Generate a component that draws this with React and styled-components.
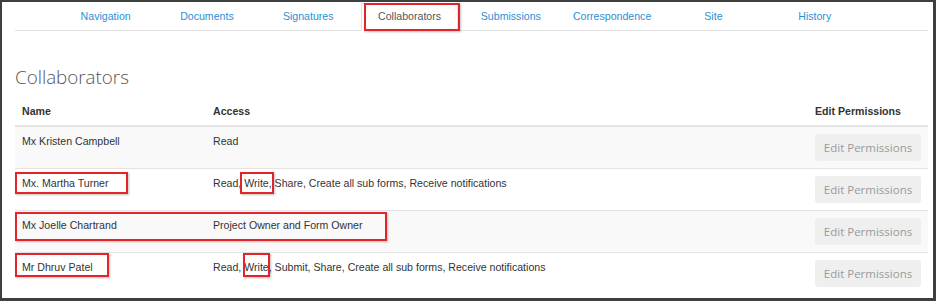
import React from 'react';
import { createGlobalStyle, styled, css } from 'styled-components';

const tabs = [
  'Navigation',
  'Documents',
  'Signatures',
  'Collaborators',
  'Submissions',
  'Correspondence',
  'Site',
  'History',
];

const collaborators = [
  { name: 'Mx Kristen Campbell', access: 'Read' },
  { name: 'Mx. Martha Turner', access: 'Read, Write, Share, Create all sub forms, Receive notifications' },
  { name: 'Mx Joelle Chartrand', access: 'Project Owner and Form Owner' },
  { name: 'Mr Dhruv Patel', access: 'Read, Write, Submit, Share, Create all sub forms, Receive notifications' },
];

// red call-outs drawn over the screenshot, page coordinates
const marks = [
  { x: 364, y: 3, w: 96, h: 28 },
  { x: 15, y: 172, w: 113, h: 22 },
  { x: 240, y: 172, w: 34, h: 22 },
  { x: 15, y: 212, w: 372, h: 29 },
  { x: 15, y: 253, w: 94, h: 24 },
  { x: 243, y: 253, w: 27, h: 24 },
];

const App = () => {
  return (
    <>
      <GlobalStyle />
      <Frame>
        <Content>
          <TabBar>
            {tabs.map((t) => (
              <Tab key={t} $active={t === 'Collaborators'}>
                {t}
              </Tab>
            ))}
          </TabBar>
          <Heading>Collaborators</Heading>
          <Table>
            <thead>
              <tr>
                <Th $width={177}>Name</Th>
                <Th>Access</Th>
                <Th $width={106}>Edit Permissions</Th>
              </tr>
            </thead>
            <tbody>
              {collaborators.map((c, i) => (
                <Row key={c.name} $striped={i % 2 === 0}>
                  <Td>{c.name}</Td>
                  <Td>{c.access}</Td>
                  <Td>
                    <EditButton disabled>Edit Permissions</EditButton>
                  </Td>
                </Row>
              ))}
            </tbody>
          </Table>
        </Content>
        {marks.map((m, i) => (
          <Mark key={i} $x={m.x} $y={m.y} $w={m.w} $h={m.h} />
        ))}
      </Frame>
    </>
  );
};

export default App;

const GlobalStyle = createGlobalStyle`
  body {
    margin: 0;
    background: #fff;
    font-family: "Liberation Sans", Arial, sans-serif;
  }
`;

const Frame = styled.div`
  position: relative;
  box-sizing: border-box;
  width: 936px;
  height: 301px;
  border-style: solid;
  border-color: #3f3f3f;
  border-width: 2px 3px 3px 2px;
  background: #fff;
  overflow: hidden;
`;

const Content = styled.div`
  padding: 1px 5px 0 13px;
`;

const TabBar = styled.ul`
  display: flex;
  margin: 0;
  padding: 0 0 0 40px;
  list-style: none;
  border-bottom: 1px solid #e2e2e2;
`;

const Tab = styled.li`
  box-sizing: border-box;
  width: 97.3px;
  height: 27px;
  margin: 0 2px -1px;
  border: 1px solid transparent;
  border-bottom: none;
  text-align: center;
  font-size: 10.6px;
  line-height: 25px;
  color: #2c8fd3;

  ${({ $active }) =>
    $active &&
    css`
      color: #555;
      background: #fff;
      border-color: #e2e2e2;
      height: 28px;
    `};
`;

const Heading = styled.h1`
  margin: 33px 0 7px;
  font-family: "Open Sans", sans-serif;
  font-weight: 300;
  font-size: 18.8px;
  line-height: 26px;
  color: #555;
`;

const Table = styled.table`
  width: 100%;
  border-collapse: collapse;
  font-size: 10.6px;
  line-height: 14px;
  color: #333;
`;

const Th = styled.th`
  width: ${({ $width }) => ($width ? `${$width}px` : 'auto')};
  padding: 7px;
  text-align: left;
  font-weight: bold;
  border-bottom: 2px solid #e4e4e4;
`;

const Row = styled.tr`
  background: ${({ $striped }) => ($striped ? '#f9f9f9' : '#fff')};
`;

const Td = styled.td`
  padding: 7px;
  vertical-align: top;
  border-top: 1px solid #e4e4e4;
`;

const EditButton = styled.button`
  display: block;
  width: 106px;
  height: 27px;
  padding: 0;
  border: none;
  border-radius: 3px;
  background: #efefef;
  color: #9a9a9a;
  font-family: "Open Sans", sans-serif;
  font-size: 11.5px;
`;

const Mark = styled.div`
  position: absolute;
  box-sizing: border-box;
  left: ${({ $x }) => $x - 2}px;
  top: ${({ $y }) => $y - 2}px;
  width: ${({ $w }) => $w}px;
  height: ${({ $h }) => $h}px;
  border: 2px solid #e2252b;
  box-shadow: 1px 1px 2px rgba(0, 0, 0, 0.25);
  pointer-events: none;
`;
